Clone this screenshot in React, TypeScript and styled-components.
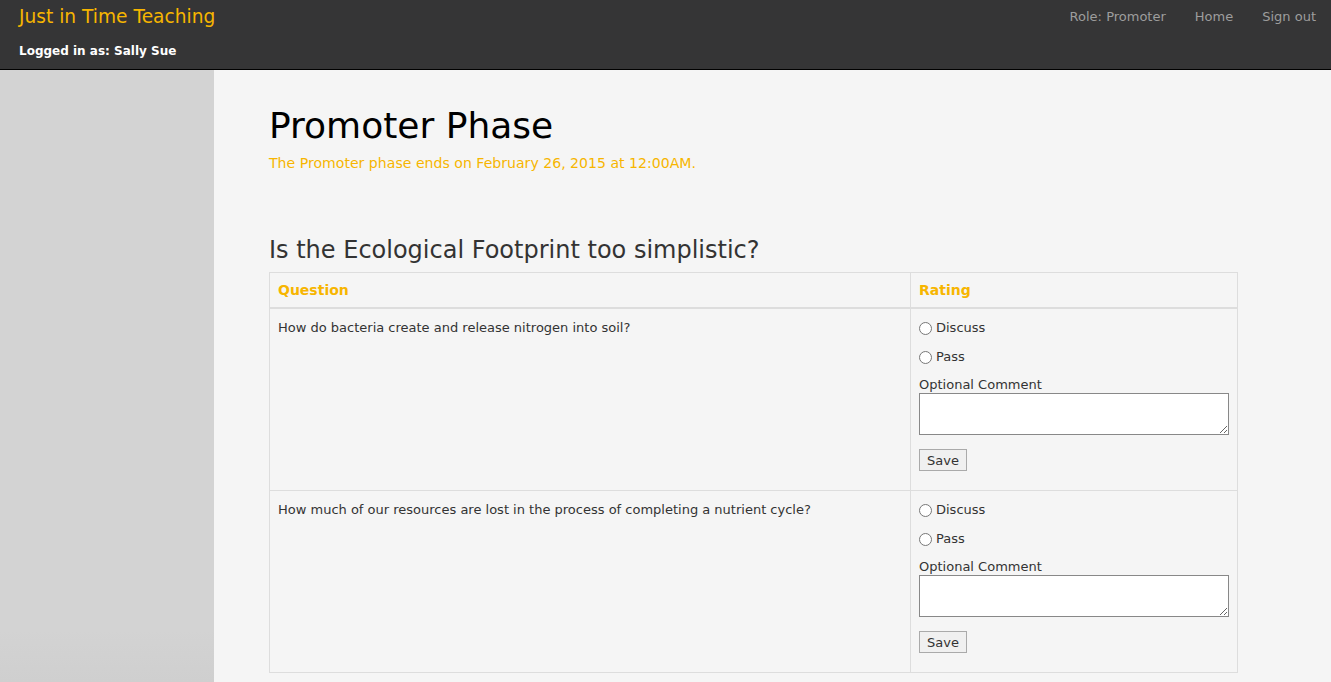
import React from "react";
import styled, { createGlobalStyle } from "styled-components";

const Global = createGlobalStyle`
  html, body { margin: 0; padding: 0; }
  body {
    font-family: Verdana, "DejaVu Sans", sans-serif;
    background: #f5f5f5;
    color: #333;
  }
  * { box-sizing: border-box; }
`;

const Page = styled.div`
  display: flex;
  flex-direction: column;
  min-height: 682px;
`;

const Header = styled.header`
  background: #353536;
  height: 70px;
  border-bottom: 1px solid #000;
  display: flex;
  justify-content: space-between;
  padding: 0 15px 0 19px;
`;

const Brand = styled.div`
  display: flex;
  flex-direction: column;
`;

const Title = styled.div`
  color: #f7b500;
  font-size: 18.6px;
  line-height: 22px;
  margin-top: 6px;
`;

const Logged = styled.div`
  color: #fff;
  font-size: 12px;
  font-weight: bold;
  line-height: 16px;
  margin-top: 15px;
`;

const Nav = styled.nav`
  display: flex;
  gap: 29px;
  padding-top: 8px;
`;

const NavLink = styled.a`
  color: #9d9d9d;
  font-size: 13px;
  line-height: 18px;
  text-decoration: none;
`;

const Body = styled.div`
  flex: 1;
  display: flex;
`;

const Sidebar = styled.aside`
  width: 214px;
  background: linear-gradient(to bottom, #d3d3d3 0, #d3d3d3 560px, #cfcfcf 611px);
  flex-shrink: 0;
`;

const Main = styled.main`
  flex: 1;
  background: #f5f5f5;
  padding: 0 93px 0 55px;
`;

const H1 = styled.h1`
  font-size: 36px;
  font-weight: normal;
  color: #000;
  margin: 0;
  padding-top: 35px;
  line-height: 42px;
`;

const Sub = styled.p`
  color: #f7b500;
  font-size: 14.1px;
  margin: 6px 0 0;
  line-height: 20px;
`;

const H2 = styled.h2`
  font-size: 24px;
  font-weight: normal;
  color: #333;
  margin: 62px 0 0;
  line-height: 30px;
`;

const Table = styled.table`
  width: 969px;
  border-collapse: collapse;
  margin-top: 7px;
  border: 1px solid #ddd;
`;

const Th = styled.th<{ w?: number }>`
  text-align: left;
  color: #f7b500;
  font-size: 14px;
  font-weight: bold;
  padding: 8px 8px;
  line-height: 18px;
  border: 1px solid #ddd;
  border-bottom: 2px solid #ddd;
  ${(p) => (p.w ? `width: ${p.w}px;` : "")}
`;

const Td = styled.td`
  vertical-align: top;
  font-size: 13px;
  color: #333;
  padding: 9px 8px 8px;
  line-height: 20px;
  border: 1px solid #ddd;
`;

const Rating = styled.div`
  display: flex;
  flex-direction: column;
`;

const RadioRow = styled.label`
  display: flex;
  align-items: center;
  height: 20px;
  margin-bottom: 9px;
  font-size: 13px;
  color: #333;
  input { margin: 0 4px 0 0; width: 13px; height: 13px; }
`;

const CommentLabel = styled.div`
  font-size: 13px;
  line-height: 17px;
  color: #333;
`;

const TextArea = styled.textarea`
  width: 100%;
  height: 42px;
  border: 1px solid #888;
  background: #fff;
  margin: 0;
  display: block;
`;

const Save = styled.button`
  align-self: flex-start;
  margin-top: 14px;
  margin-bottom: 11px;
  height: 22px;
  padding: 0 7px;
  font-family: Verdana, "DejaVu Sans", sans-serif;
  font-size: 13px;
  color: #333;
  background: #f0f0f0;
  border: 1px solid #aaa;
  border-radius: 0;
`;

const questions = [
  "How do bacteria create and release nitrogen into soil?",
  "How much of our resources are lost in the process of completing a nutrient cycle?",
];

export default function App() {
  return (
    <Page>
      <Global />
      <Header>
        <Brand>
          <Title>Just in Time Teaching</Title>
          <Logged>Logged in as: Sally Sue</Logged>
        </Brand>
        <Nav>
          <NavLink>Role: Promoter</NavLink>
          <NavLink>Home</NavLink>
          <NavLink>Sign out</NavLink>
        </Nav>
      </Header>
      <Body>
        <Sidebar />
        <Main>
          <H1>Promoter Phase</H1>
          <Sub>The Promoter phase ends on February 26, 2015 at 12:00AM.</Sub>
          <H2>Is the Ecological Footprint too simplistic?</H2>
          <Table>
            <thead>
              <tr>
                <Th w={641}>Question</Th>
                <Th>Rating</Th>
              </tr>
            </thead>
            <tbody>
              {questions.map((q, i) => (
                <tr key={i}>
                  <Td>{q}</Td>
                  <Td>
                    <Rating>
                      <RadioRow>
                        <input type="radio" name={`r${i}`} />
                        Discuss
                      </RadioRow>
                      <RadioRow>
                        <input type="radio" name={`r${i}`} />
                        Pass
                      </RadioRow>
                      <CommentLabel>Optional Comment</CommentLabel>
                      <TextArea />
                      <Save>Save</Save>
                    </Rating>
                  </Td>
                </tr>
              ))}
            </tbody>
          </Table>
        </Main>
      </Body>
    </Page>
  );
}
